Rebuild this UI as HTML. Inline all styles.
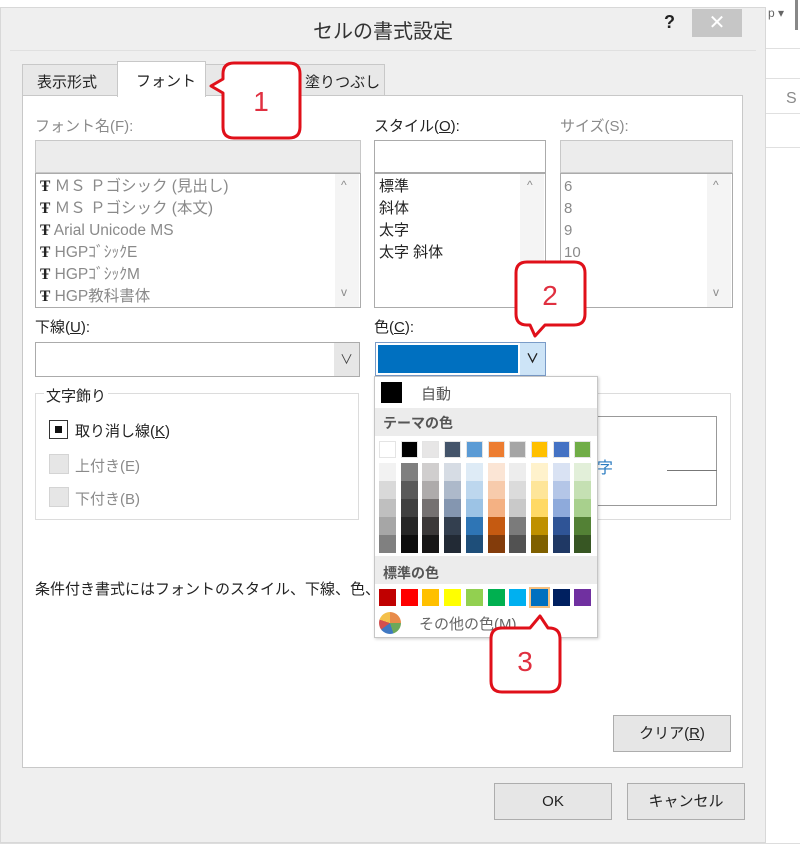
<!DOCTYPE html>
<html><head><meta charset="utf-8">
<style>
*{box-sizing:border-box;margin:0;padding:0}
body{width:800px;height:849px;position:relative;background:#fff;overflow:hidden;font-family:"Liberation Sans","Noto Sans CJK JP",sans-serif;color:#222}
.a{position:absolute}
.t{position:absolute;font-size:15px;white-space:nowrap}
.g{color:#8a8a8a}
.box{position:absolute;border:1px solid #ababab;background:#fff}
.btn{position:absolute;border:1px solid #adadad;background:#e6e6e6;font-size:15px;text-align:center}
.sw{position:absolute;width:17px}
.co{position:absolute;border:3px solid #e0101a;border-radius:12px;background:#fff;color:#e0303a;font-size:28px;text-align:center}
</style></head><body>
<!-- spreadsheet bg -->
<div class="a" style="left:766px;top:0;width:34px;height:849px;background:#fff"></div>
<div class="a" style="left:766px;top:48px;width:34px;height:1px;background:#e0e0e0"></div>
<div class="a" style="left:766px;top:78px;width:34px;height:1px;background:#e0e0e0"></div>
<div class="a" style="left:766px;top:113px;width:34px;height:1px;background:#e0e0e0"></div>
<div class="a" style="left:766px;top:147px;width:34px;height:1px;background:#e0e0e0"></div>
<div class="t g" style="left:786px;top:90px;font-size:16px">S</div>
<div class="t" style="left:768px;top:6px;font-size:12px;color:#666">p ▾</div>
<div class="a" style="left:795px;top:0;width:3px;height:30px;background:#888"></div>
<div class="a" style="left:0;top:843px;width:800px;height:1px;background:#ddd"></div>
<!-- dialog -->
<div class="a" style="left:0;top:7px;width:766px;height:836px;background:#efefef;border:1px solid #d8d8d8"></div>
<div class="t" style="left:313px;top:15px;font-size:20px;color:#333">セルの書式設定</div>
<div class="t" style="left:664px;top:12px;font-size:18px;font-weight:bold">?</div>
<div class="a" style="left:692px;top:9px;width:50px;height:28px;background:#c6c6c6;color:#fff;font-size:20px;text-align:center;line-height:28px">✕</div>
<div class="a" style="left:10px;top:50px;width:746px;height:1px;background:#e0e0e0"></div>
<!-- tabs -->
<div class="a" style="left:22px;top:64px;width:96px;height:32px;background:#e8e8e8;border:1px solid #c8c8c8"></div>
<div class="t" style="left:37px;top:71px">表示形式</div>
<div class="a" style="left:205px;top:64px;width:180px;height:32px;background:#e8e8e8;border:1px solid #c8c8c8"></div>
<div class="t" style="left:305px;top:71px">塗りつぶし</div>
<!-- panel -->
<div class="a" style="left:22px;top:95px;width:721px;height:673px;background:#fff;border:1px solid #c8c8c8"></div>
<div class="a" style="left:117px;top:61px;width:89px;height:36px;background:#fff;border:1px solid #c8c8c8;border-bottom:none"></div>
<div class="t" style="left:136px;top:70px">フォント</div>
<!-- labels -->
<div class="t g" style="left:35px;top:115px">フォント名(F):</div>
<div class="t" style="left:374px;top:115px">スタイル(<u>O</u>):</div>
<div class="t g" style="left:560px;top:115px">サイズ(S):</div>
<!-- font name -->
<div class="box" style="left:35px;top:140px;width:326px;height:33px;background:#ececec;border-color:#c8c8c8"></div>
<div class="box" style="left:35px;top:173px;width:326px;height:135px"></div>
<div class="a" style="left:335px;top:174px;width:24px;height:133px;background:#f4f4f4"></div>
<div class="t g" style="left:341px;top:178px;font-size:12px">^</div>
<div class="t g" style="left:341px;top:285px;font-size:12px">v</div>
<div class="t g" style="left:40px;top:176px;line-height:22px;font-size:15.5px"><b style="color:#222;font-family:'Liberation Serif',serif">Ŧ</b> ＭＳ Ｐゴシック (見出し)<br><b style="color:#222;font-family:'Liberation Serif',serif">Ŧ</b> ＭＳ Ｐゴシック (本文)<br><b style="color:#222;font-family:'Liberation Serif',serif">Ŧ</b> Arial Unicode MS<br><b style="color:#222;font-family:'Liberation Serif',serif">Ŧ</b> HGPｺﾞｼｯｸE<br><b style="color:#222;font-family:'Liberation Serif',serif">Ŧ</b> HGPｺﾞｼｯｸM<br><b style="color:#222;font-family:'Liberation Serif',serif">Ŧ</b> HGP教科書体</div>
<!-- style -->
<div class="box" style="left:374px;top:140px;width:172px;height:33px"></div>
<div class="box" style="left:374px;top:173px;width:172px;height:135px"></div>
<div class="a" style="left:520px;top:174px;width:24px;height:133px;background:#f4f4f4"></div>
<div class="t g" style="left:527px;top:178px;font-size:12px">^</div>
<div class="t" style="left:379px;top:176px;line-height:22px">標準<br>斜体<br>太字<br>太字 斜体</div>
<!-- size -->
<div class="box" style="left:560px;top:140px;width:173px;height:33px;background:#ececec;border-color:#c8c8c8"></div>
<div class="box" style="left:560px;top:173px;width:173px;height:135px"></div>
<div class="a" style="left:707px;top:174px;width:24px;height:133px;background:#f4f4f4"></div>
<div class="t g" style="left:713px;top:178px;font-size:12px">^</div>
<div class="t g" style="left:713px;top:285px;font-size:12px">v</div>
<div class="t g" style="left:564px;top:176px;line-height:22px">6<br>8<br>9<br>10</div>
<!-- underline -->
<div class="t" style="left:35px;top:316px">下線(<u>U</u>):</div>
<div class="box" style="left:35px;top:342px;width:325px;height:35px"></div>
<div class="a" style="left:334px;top:343px;width:25px;height:33px;background:#e6e6e6;text-align:center;font-size:13px;line-height:33px;color:#444">∨</div>
<div class="t" style="left:374px;top:316px">色(<u>C</u>):</div>
<div class="box" style="left:375px;top:342px;width:171px;height:34px;border-color:#7a9cc8"></div>
<div class="a" style="left:378px;top:345px;width:140px;height:28px;background:#0070c0"></div>
<div class="a" style="left:520px;top:343px;width:25px;height:32px;background:#cde4f7;text-align:center;font-size:13px;line-height:32px;font-weight:bold">∨</div>
<!-- effects group -->
<div class="a" style="left:35px;top:393px;width:324px;height:127px;border:1px solid #dcdcdc"></div>
<div class="t" style="left:44px;top:385px;background:#fff;padding:0 2px">文字飾り</div>
<div class="a" style="left:49px;top:420px;width:19px;height:19px;border:1px solid #333;background:#fff"></div>
<div class="a" style="left:55px;top:426px;width:7px;height:7px;background:#111"></div>
<div class="t" style="left:75px;top:420px">取り消し線(<u>K</u>)</div>
<div class="a" style="left:49px;top:454px;width:20px;height:20px;background:#e6e6e6;border:1px solid #d4d4d4"></div>
<div class="t g" style="left:75px;top:455px">上付き(E)</div>
<div class="a" style="left:49px;top:487px;width:20px;height:20px;background:#e6e6e6;border:1px solid #d4d4d4"></div>
<div class="t g" style="left:75px;top:488px">下付き(B)</div>
<!-- preview -->
<div class="a" style="left:560px;top:393px;width:171px;height:127px;border:1px solid #dcdcdc"></div>
<div class="a" style="left:560px;top:416px;width:157px;height:90px;border:1px solid #999;border-left:none"></div>
<div class="a" style="left:667px;top:470px;width:50px;height:1px;background:#777"></div>
<div class="t" style="left:597px;top:454px;color:#2a7bc0;font-size:16px">字</div>
<div class="t" style="left:35px;top:578px">条件付き書式にはフォントのスタイル、下線、色、お</div>
<!-- popup -->
<div class="a" style="left:374px;top:376px;width:224px;height:262px;background:#fff;border:1px solid #c6c6c6;box-shadow:1px 1px 3px rgba(0,0,0,.2)"></div>
<div class="a" style="left:381px;top:382px;width:21px;height:21px;background:#000"></div>
<div class="t" style="left:421px;top:383px;color:#555">自動</div>
<div class="a" style="left:375px;top:408px;width:222px;height:28px;background:#ececec"></div>
<div class="t" style="left:383px;top:413px;color:#555;font-weight:bold;font-size:14px">テーマの色</div>
<div class="a" style="left:375px;top:556px;width:222px;height:28px;background:#ececec"></div>
<div class="t" style="left:383px;top:563px;color:#555;font-weight:bold;font-size:14px">標準の色</div>
<div id="sw"></div>
<div class="a" style="left:379px;top:612px;width:22px;height:22px;border-radius:50%;background:conic-gradient(#e88b4a 0 25%,#6ca85a 0 45%,#3f78c2 0 65%,#d24f4f 0 80%,#f4c04a 0 100%)"></div>
<div class="t" style="left:419px;top:613px;color:#666">その他の色(M)...</div>
<!-- buttons -->
<div class="btn" style="left:613px;top:715px;width:118px;height:37px;line-height:35px">クリア(<u>R</u>)</div>
<div class="btn" style="left:494px;top:783px;width:118px;height:37px;line-height:35px">OK</div>
<div class="btn" style="left:627px;top:783px;width:118px;height:37px;line-height:35px">キャンセル</div>
<!-- callouts -->
<svg class="a" style="left:0;top:0" width="800" height="849">
<g fill="#fff" stroke="#e0101a" stroke-width="3" stroke-linejoin="round">
<path d="M234 63 H289 Q300 63 300 74 V127 Q300 138 289 138 H234 Q223 138 223 127 V93 L211 86 L223 79 V74 Q223 63 234 63Z"/>
<path d="M527 262 H574 Q585 262 585 273 V314 Q585 325 574 325 H545 L535 336 L530 325 H527 Q516 325 516 314 V273 Q516 262 527 262Z"/>
<path d="M502 628 H530 L540 616 L548 628 H549 Q560 628 560 639 V681 Q560 692 549 692 H502 Q491 692 491 681 V639 Q491 628 502 628Z"/>
</g>
<g fill="#e03040" font-family="Liberation Sans" font-size="28" text-anchor="middle">
<text x="261" y="111">1</text><text x="550" y="305">2</text><text x="525" y="671">3</text>
</g>
</svg>
<script>
var th=[["#ffffff","#f2f2f2","#d9d9d9","#bfbfbf","#a6a6a6","#808080"],["#000000","#7f7f7f","#595959","#404040","#262626","#0d0d0d"],["#e7e6e6","#d0cece","#aeabab","#757171","#3b3838","#171616"],["#44546a","#d6dce4","#adb9ca","#8496b0","#333f4f","#222a35"],["#5b9bd5","#deebf6","#bdd7ee","#9cc3e5","#2e75b5","#1e4e79"],["#ed7d31","#fbe5d5","#f7cbac","#f4b183","#c55a11","#833c0b"],["#a5a5a5","#ededed","#dbdbdb","#c9c9c9","#7b7b7b","#525252"],["#ffc000","#fff2cc","#fee599","#ffd965","#bf9000","#7f6000"],["#4472c4","#d9e2f3","#b4c6e7","#8eaadb","#2f5496","#1f3864"],["#70ad47","#e2efd9","#c5e0b3","#a8d08d","#538135","#375623"]];
var st=["#c00000","#ff0000","#ffc000","#ffff00","#92d050","#00b050","#00b0f0","#0070c0","#002060","#7030a0"];
var h="";
for(var i=0;i<10;i++){var x=379+i*21.7;
h+='<div class="sw" style="left:'+x+'px;top:441px;height:17px;background:'+th[i][0]+';border:1px solid #e4e4e4"></div>';
for(var j=1;j<6;j++)h+='<div class="sw" style="left:'+x+'px;top:'+(463+(j-1)*18)+'px;height:18px;background:'+th[i][j]+'"></div>';
h+='<div class="sw" style="left:'+x+'px;top:589px;height:17px;background:'+st[i]+(i==7?';outline:2px solid #f5c080':'')+'"></div>';}
document.getElementById("sw").outerHTML=h;
</script>
</body></html>
